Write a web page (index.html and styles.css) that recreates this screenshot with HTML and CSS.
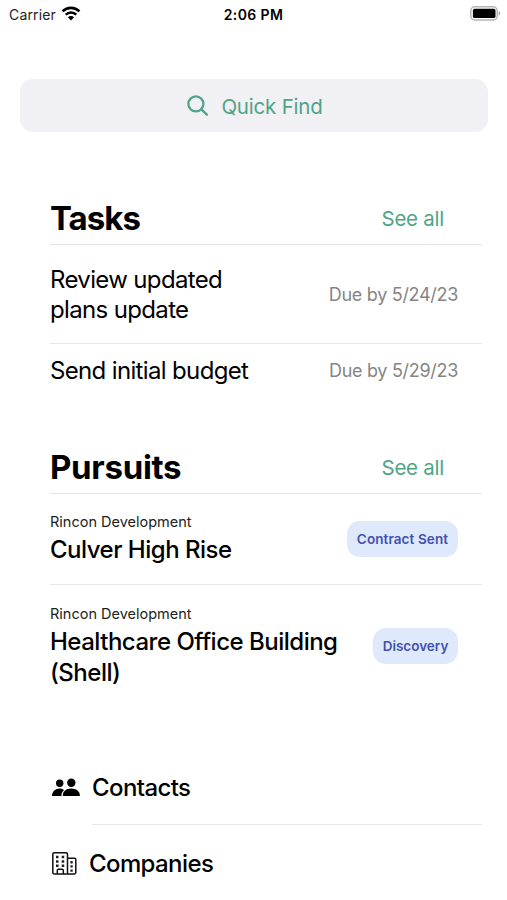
FILE: index.html
```
<!DOCTYPE html>
<html lang="en">

<head>
    <meta charset="UTF-8"/>
    <meta content="width=device-width, initial-scale=1.0" name="viewport"/>
    <title>Home</title>
    <link rel="stylesheet" href="styles.css">
</head>

<body>
    <!-- status bar -->
    <div class="status">
        <div class="carrier">
            <span>Carrier</span>
            <svg class="wifi" viewBox="0 0 20 15">
                <path d="M1.6 5.4a12 12 0 0 1 16.8 0" fill="none" stroke="#000" stroke-width="2.7"/>
                <path d="M4.7 8.6a7.6 7.6 0 0 1 10.6 0" fill="none" stroke="#000" stroke-width="2.5"/>
                <path d="M10 14.4L6.9 11.2a4.4 4.4 0 0 1 6.2 0z"/>
            </svg>
        </div>
        <span class="time">2:06 PM</span>
        <svg class="battery" viewBox="0 0 31 15">
            <rect x="0.8" y="0.8" width="26.4" height="13.2" rx="4" fill="#fff" stroke="#b4b4b4" stroke-width="1.5"/>
            <rect x="2.9" y="2.8" width="22.6" height="9.3" rx="1.6"/>
            <path d="M28.6 5.2c2.2.6 2.2 3.8 0 4.4z" fill="#aaa"/>
        </svg>
    </div>

    <div class="search">
        <svg viewBox="0 0 22 22">
            <circle cx="8.9" cy="8.9" r="7.5"/>
            <path d="M14.3 14.3l5.6 5.4" stroke-linecap="round"/>
        </svg>
        <span>Quick Find</span>
    </div>

    <!-- tasks -->
    <div class="section tasks">
        <div class="header">
            <h2>Tasks</h2>
            <a class="more">See all</a>
        </div>
        <ul>
            <li>
                <span class="name">Review updated<br>plans update</span>
                <span class="due">Due by 5/24/23</span>
            </li>
            <li>
                <span class="name">Send initial budget</span>
                <span class="due">Due by 5/29/23</span>
            </li>
        </ul>
    </div>

    <!-- pursuits -->
    <div class="section pursuits">
        <div class="header">
            <h2>Pursuits</h2>
            <a class="more">See all</a>
        </div>
        <ul>
            <li>
                <div class="info">
                    <p class="company">Rincon Development</p>
                    <p class="title">Culver High Rise</p>
                </div>
                <span class="tag sent">Contract Sent</span>
            </li>
            <li>
                <div class="info">
                    <p class="company">Rincon Development</p>
                    <p class="title">Healthcare Office Building<br>(Shell)</p>
                </div>
                <span class="tag discovery">Discovery</span>
            </li>
        </ul>
    </div>

    <!-- links -->
    <div class="links">
        <div class="link contacts">
            <svg viewBox="0 0 28 19">
                <circle cx="7.7" cy="5.3" r="3.7"/>
                <path d="M0 18c0-4.300 3.300-7.400 7.500-7.400 1.900 0 3.500.6 4.600 1.500-1.700 1.400-2.600 3.300-2.700 5.900z"/>
                <circle cx="19.300" cy="4.700" r="4.200"/>
                <path d="M10.800 18c-.4-4.300 3.200-7.500 8.500-7.500s8.900 3.200 8.500 7.500z"/>
            </svg>
            <span>Contacts</span>
        </div>
        <div class="link companies">
            <svg viewBox="0 0 25 23">
                <g fill="none" stroke="#111" stroke-width="1.5">
                    <path d="M15.500 22H2.200Q.8 22 .8 20.600V2.200Q.8.8 2.200.8h11.900q1.400 0 1.400 1.400V22h6.900q1.400 0 1.400-1.400V7.600q0-1.400-1.400-1.400h-6.900"/>
                    <path d="M5.300 22v-3.600q0-1.100 1.100-1.100h3.800q1.100 0 1.100 1.100V22"/>
                </g>
                <path d="M4 3.800h2.500v2.500H4zm5.700 0h2.500v2.500H9.700zM4 8.200h2.500v2.500H4zm5.700 0h2.500v2.500H9.700zM4 12.500h2.500V15H4zm5.700 0h2.500V15H9.700zM18.400 9.100h2.300v2.300h-2.300zm0 4.200h2.300v2.300h-2.300zm0 4.200h2.300v2.300h-2.300z" fill="#222"/>
            </svg>
            <span>Companies</span>
        </div>
    </div>
</body>

</html>
```
FILE: styles.css
```
* {
    margin: 0;
    padding: 0;
    box-sizing: border-box;
}

body {
    width: 507px;
    height: 900px;
    overflow: hidden;
    background: #fff;
    color: #000;
    font-family: Inter, 'Liberation Sans', sans-serif;
}

ul {
    list-style: none;
}

.status {
    display: grid;
    grid-template-columns: 1fr auto 1fr;
    align-items: center;
    height: 28px;
    padding: 0 7px 0 9px;
    font-size: 14px;
}

.carrier {
    display: flex;
    align-items: center;
    gap: 5px;
    color: #222;
    letter-spacing: 0.15px;
}

.wifi {
    width: 20px;
    height: 15px;
    margin-top: -2px;
}

.time {
    margin-left: -2px;
    font-weight: 600;
    letter-spacing: 0.4px;
}

.battery {
    justify-self: end;
    width: 31px;
    height: 15px;
    margin: -1px -1px 0 0;
}

.search {
    display: flex;
    align-items: center;
    justify-content: center;
    gap: 12px;
    width: 468px;
    height: 53px;
    margin: 51px 0 0 20px;
    padding: 1px 0 0 2px;
    border-radius: 13px;
    background: #f0f0f5;
    color: #4fa485;
    font-size: 20.5px;
    letter-spacing: -0.2px;
}

.search svg {
    width: 22px;
    height: 22px;
    fill: none;
    stroke: #4fa485;
    stroke-width: 2.3;
}

.section {
    margin: 0 25px 0 50px;
}

.header {
    display: flex;
    align-items: center;
    justify-content: space-between;
    height: 54px;
    padding-right: 38px;
    border-bottom: 1px solid #e4e4e4;
}

.header h2 {
    font-size: 33px;
    font-weight: 700;
    letter-spacing: -0.3px;
}

.tasks h2 {
    letter-spacing: -1px;
}

.more {
    padding-top: 1px;
    color: #4fa485;
    font-size: 20.5px;
    letter-spacing: -0.25px;
}

.section li {
    display: flex;
    align-items: center;
    justify-content: space-between;
    padding-right: 24px;
    border-bottom: 1px solid #e8e8e8;
}

.section li:last-child {
    border-bottom: none;
}

.tasks {
    margin-top: 59px;
}

.tasks li {
    height: 99px;
}

.tasks li:last-child {
    height: 53px;
}

.name,
.title {
    font-size: 24px;
    line-height: 30.5px;
    letter-spacing: -0.65px;
    white-space: nowrap;
}

.name {
    padding-top: 2px;
}

.due {
    color: #858585;
    font-size: 18px;
    letter-spacing: -0.3px;
}

.pursuits {
    margin-top: 43px;
}

.pursuits li {
    height: 91px;
}

.pursuits li:last-child {
    height: 122px;
}

.info {
    padding-bottom: 4px;
}

.company {
    color: #222;
    font-size: 14.5px;
    line-height: 27px;
}

.title {
    font-weight: 500;
    letter-spacing: -0.5px;
}

.tag {
    height: 36px;
    border-radius: 13px;
    background: #deeafc;
    color: #4450af;
    font-size: 13.5px;
    font-weight: 600;
    line-height: 36px;
    text-align: center;
}

.sent {
    width: 111px;
    letter-spacing: 0.1px;
}

.discovery {
    width: 85px;
}

.links {
    margin: 42px 25px 0 51px;
    font-size: 24px;
    font-weight: 500;
    letter-spacing: -0.6px;
}

.link {
    display: flex;
    align-items: center;
    height: 76px;
}

/* the divider starts at the label, not at the icon */
.contacts {
    gap: 12px;
    background: linear-gradient(#e8e8e8, #e8e8e8) 41px 100% / 100% 1px no-repeat;
}

.contacts svg {
    width: 28px;
    height: 19px;
    margin-left: 1px;
}

.companies {
    gap: 12px;
}

.companies svg {
    width: 25px;
    height: 23px;
    margin-left: 1px;
}
```
